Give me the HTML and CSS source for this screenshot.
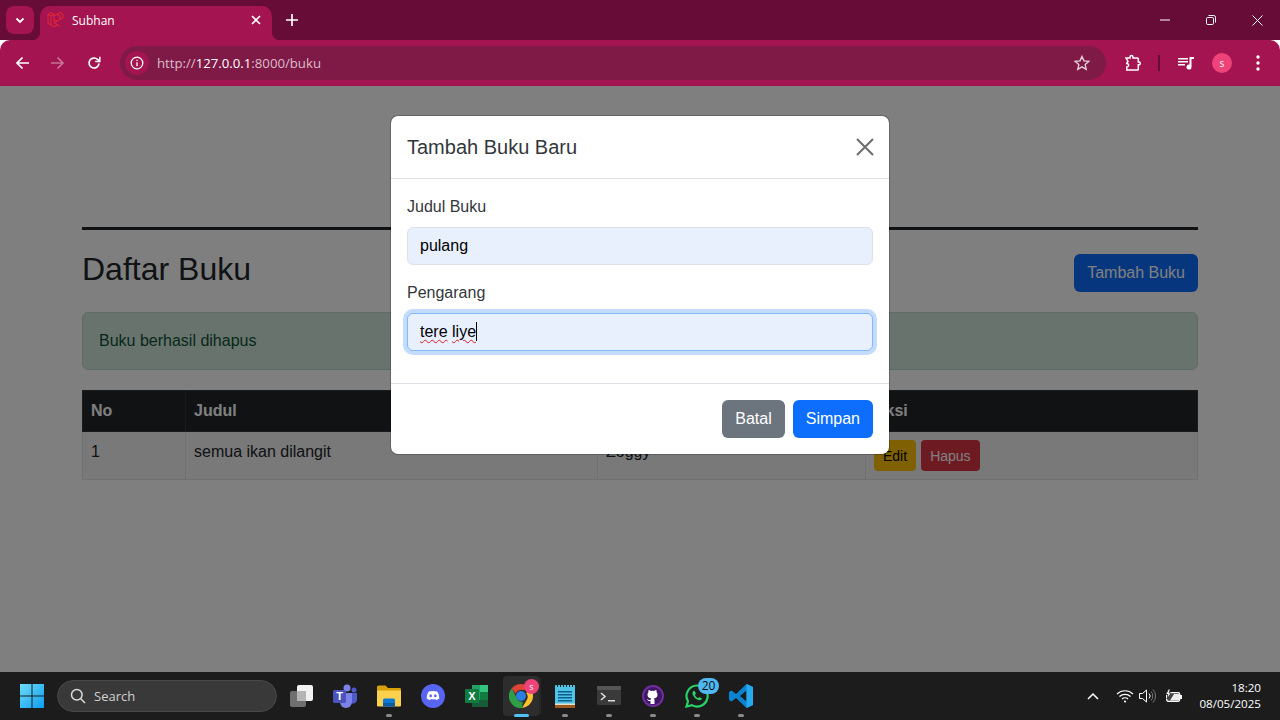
FILE: index.html
```html
<!DOCTYPE html>
<html>
<head>
<meta charset="UTF-8" />
<title>Subhan</title>
<link rel="stylesheet" href="styles.css">
</head>
<body>

<div class="tabstrip">
	<button class="tabsearch"><svg width="12" height="12" viewBox="0 0 12 12"><path d="M2.5 4.5 6 8l3.5-3.500" fill="none" stroke="#fff" stroke-width="1.8"/></svg></button>
	<div class="tab">
		<svg class="favicon" width="18" height="18" viewBox="0 0 18 18" fill="none" stroke="#e0243a" stroke-width="1.1" stroke-linejoin="round"><path d="M1 3.200 4 1.500l3 1.700v8.600l6 3.400M1 3.200v9l6 3.600 3.200-1.800M4 5l3-1.800M1 3.200 4 5v8.600l3 2.200M7 11.800l6-3.400V5l-3-1.700L7 5v3.400l3 1.700 6-3.400V3.300l-3-1.700-3 1.700M13 8.400l3-1.700"/></svg>
		<span class="tab-title">Subhan</span>
		<svg class="tab-close" width="10" height="10" viewBox="0 0 10 10"><path d="M1 1l8 8M9 1 1 9" stroke="#fff" stroke-width="1.6"/></svg>
	</div>
	<svg class="newtab" width="12" height="12" viewBox="0 0 12 12"><path d="M6 0v12M0 6h12" stroke="#fff" stroke-width="1.7"/></svg>
	<div class="winctl">
		<span><svg width="10" height="10" viewBox="0 0 10 10"><path d="M0 5h10" stroke="#fff"/></svg></span>
		<span><svg width="10" height="10" viewBox="0 0 10 10" fill="none" stroke="#fff"><rect x=".5" y="2.500" width="7" height="7" rx="1.200"/><path d="M2.500.5h5.200a1.800 1.800 0 0 1 1.800 1.800v5.200"/></svg></span>
		<span><svg width="11" height="11" viewBox="0 0 11 11"><path d="M.5.5l10 10M10.500.5l-10 10" stroke="#fff"/></svg></span>
	</div>
</div>

<div class="toolbar">
	<svg class="navicon" width="14" height="14" viewBox="0 0 14 14" fill="none" stroke="#fff" stroke-width="1.7"><path d="M14 7H2M7.500 1.500 2 7l5.500 5.500"/></svg>
	<svg class="navicon dim" width="14" height="14" viewBox="0 0 14 14" fill="none" stroke="#fff" stroke-width="1.7"><path d="M0 7h12M6.500 1.500 12 7l-5.500 5.500"/></svg>
	<svg class="navicon" width="14" height="14" viewBox="0 0 14 14" fill="none" stroke="#fff" stroke-width="1.7"><path d="M12 7.500A5 5 0 1 1 10.500 3.400L12.500 5"/><path d="M12.800.8v4.600H8.200" stroke-width="1.500"/></svg>
	<div class="omnibox">
		<span class="site-chip"><svg width="14" height="14" viewBox="0 0 14 14" fill="none" stroke="#fff" stroke-width="1.300"><circle cx="7" cy="7" r="5.800"/><path d="M7 6.200v4M7 3.800v1.300"/></svg></span>
		<span class="url">http://<b>127.0.0.1</b>:8000/buku</span>
		<svg class="star" width="16" height="16" viewBox="0 0 16 16" fill="none" stroke="#e8d0da" stroke-width="1.400"><path d="M8 1.500l2 4.400 4.700.5-3.500 3.200 1 4.700L8 11.900l-4.200 2.400 1-4.700L1.300 6.400 6 5.900z"/></svg>
	</div>
	<svg class="ext" width="18" height="18" viewBox="0 0 18 18" fill="none" stroke="#fff" stroke-width="1.500"><path d="M2 4h4V3a1.500 1.500 0 0 1 3 0v1h4.500a.8.800 0 0 1 .8.800V8h1a1.500 1.500 0 0 1 0 2.800h-1v4.400a.8.800 0 0 1-.8.800H2.800V13a1.800 1.800 0 0 0 0-3.600V9L4 7.500z"/></svg>
	<span class="divider"></span>
	<svg class="media" width="16" height="14" viewBox="0 0 16 14" fill="#fff"><path d="M0 2h10v1.400H0zM0 5h10v1.400H0zM0 8h7v1.400H0z"/><path d="M11.500 1H16v2h-2.500v8a2.500 2.500 0 1 1-2-2.400z"/></svg>
	<span class="avatar">s</span>
	<svg class="menu" width="4" height="16" viewBox="0 0 4 16" fill="#fff"><circle cx="2" cy="2" r="1.700"/><circle cx="2" cy="8" r="1.700"/><circle cx="2" cy="14" r="1.700"/></svg>
</div>

<div class="page">
	<div class="container">
		<hr class="rule">
		<div class="head-row">
			<h2>Daftar Buku</h2>
			<button class="btn btn-primary">Tambah Buku</button>
		</div>
		<div class="alert">Buku berhasil dihapus</div>
		<table>
			<thead>
				<tr><th class="c-no">No</th><th class="c-judul">Judul</th><th class="c-pengarang">Pengarang</th><th>Aksi</th></tr>
			</thead>
			<tbody>
				<tr>
					<td>1</td>
					<td>semua ikan dilangit</td>
					<td>Zoggy</td>
					<td class="actions"><button class="btn btn-sm btn-warning">Edit</button><button class="btn btn-sm btn-danger">Hapus</button></td>
				</tr>
			</tbody>
		</table>
	</div>

	<div class="backdrop">
		<div class="modal">
			<div class="modal-header">
				<h5>Tambah Buku Baru</h5>
				<svg width="18" height="18" viewBox="0 0 18 18"><path d="M1 1l16 16M17 1 1 17" stroke="#6c6c6c" stroke-width="2"/></svg>
			</div>
			<div class="modal-body">
				<label>Judul Buku</label>
				<input class="field" type="text" value="pulang">
				<label>Pengarang</label>
				<div class="field focused"><span class="typo">tere</span> <span class="typo">liye</span><span class="caret"></span></div>
			</div>
			<div class="modal-footer">
				<button class="btn btn-secondary">Batal</button>
				<button class="btn btn-primary">Simpan</button>
			</div>
		</div>
	</div>
</div>

<div class="taskbar">
	<div class="task">
		<svg width="24" height="24" viewBox="0 0 24 24"><defs><linearGradient id="win" x1="0" y1="0" x2="1" y2="1"><stop offset="0" stop-color="#6fdcf8"/><stop offset="1" stop-color="#0b9cf0"/></linearGradient></defs><path fill="url(#win)" d="M0 0h11.500v11.500H0zM12.500 0H24v11.500H12.500zM0 12.500h11.500V24H0zM12.500 12.500H24V24H12.500z"/></svg>
	</div>
	<div class="search">
		<svg width="16" height="16" viewBox="0 0 16 16" fill="none" stroke="#ddd" stroke-width="1.500"><circle cx="6.800" cy="6.800" r="5.300"/><path d="M10.800 10.800 15 15"/></svg>
		<span>Search</span>
	</div>
	<div class="tasks">
		<div class="task"><svg width="24" height="24" viewBox="0 0 24 24"><rect x="8" y="1" width="16" height="16" rx="2" fill="#f2f2f2"/><rect x="1" y="7" width="16" height="16" rx="2" fill="#6f6f6f"/><rect x="8" y="7" width="9" height="10" fill="#b5b5b5"/></svg></div>
		<div class="task"><svg width="26" height="24" viewBox="0 0 26 24"><circle cx="15" cy="4" r="3.500" fill="#7b83eb"/><circle cx="22" cy="6" r="2.500" fill="#5059c9"/><path d="M18 9h7v7a4 4 0 0 1-6 3z" fill="#5059c9"/><path d="M8 9h12v9a6 6 0 0 1-12 0z" fill="#7b83eb"/><rect x="1" y="6" width="13" height="13" rx="1.500" fill="#4b53bc"/><text x="7.500" y="16" class="svg-t">T</text></svg></div>
		<div class="task open"><svg width="26" height="24" viewBox="0 0 26 24"><path d="M1 3a1.500 1.500 0 0 1 1.500-1.500h7L12 4h12a1.500 1.500 0 0 1 1 1.500V8H1z" fill="#d9a109"/><path d="M1 6.500h24v15a1 1 0 0 1-1 1H2a1 1 0 0 1-1-1z" fill="#fcd04f"/><path d="M7 16a1.500 1.500 0 0 1 1.500-1.500h9A1.500 1.500 0 0 1 19 16v6.500H7z" fill="#0f78d4"/><path d="M7 19h12v3.500H7z" fill="#0c5ba3"/></svg></div>
		<div class="task"><svg width="24" height="24" viewBox="0 0 24 24"><circle cx="12" cy="12" r="12" fill="#5865f2"/><path d="M7.800 7.600c2.700-.9 5.700-.9 8.400 0 1.300 1.900 2 4 2.100 7-1.100.9-2.200 1.400-3.300 1.700l-.8-1.200c-1.400.4-3 .4-4.400 0l-.8 1.200c-1.100-.3-2.200-.8-3.300-1.700.1-3 .8-5.100 2.100-7z" fill="#fff"/><ellipse cx="9.700" cy="11.800" rx="1.300" ry="1.500" fill="#5865f2"/><ellipse cx="14.300" cy="11.800" rx="1.300" ry="1.500" fill="#5865f2"/></svg></div>
		<div class="task"><svg width="24" height="24" viewBox="0 0 24 24"><path d="M7 1h16v22H7z" fill="#21a366"/><path d="M15 1h8v7h-8z" fill="#33c481"/><path d="M15 8h8v8h-8z" fill="#107c41"/><path d="M7 16h16v7H7z" fill="#185c37"/><rect y="5" width="14" height="14" rx="1" fill="#107c41"/><text x="7" y="16" class="svg-t">X</text></svg></div>
		<div class="task active">
			<svg width="24" height="24" viewBox="0 0 24 24"><path d="M12 0a12 12 0 0 1 10.400 6H12a6 6 0 0 0-5.600 3.800L2.600 4.500A12 12 0 0 1 12 0z" fill="#db4437"/><path d="M22.400 6A12 12 0 0 1 13 24l4.400-7.600A6 6 0 0 0 17.200 9z" fill="#fbc02d"/><path d="M13 24A12 12 0 0 1 2.600 4.500L7 12.600a6 6 0 0 0 6.800 5.100z" fill="#2e9f47"/><circle cx="12" cy="12" r="5" fill="#2a7de1"/></svg>
			<span class="badge-s">s</span>
		</div>
		<div class="task open"><svg width="22" height="25" viewBox="0 0 22 25"><rect x="1" y="1" width="20" height="23" rx="1" fill="#4fc3e8"/><path d="M1 21h20v3H1z" fill="#9c5a1e"/><path d="M1 19.500h20V21H1z" fill="#e8e0c8"/><path d="M4 7h14v1.500H4zM4 10h14v1.500H4zM4 13h14v1.500H4zM4 16h14v1.500H4z" fill="#0d5f8a"/><path d="M3 0h1v3H3zM6 0h1v3H6zM9 0h1v3H9zM12 0h1v3h-1zM15 0h1v3h-1zM18 0h1v3h-1z" fill="#1d1d1d"/></svg></div>
		<div class="task open"><svg width="24" height="20" viewBox="0 0 24 20"><rect width="24" height="19" rx="1.500" fill="#3a3a3a"/><rect width="24" height="4" rx="1" fill="#555"/><path d="M4 7l4 3.500L4 14" fill="none" stroke="#ddd" stroke-width="1.600"/><path d="M11 14h7v1.500h-7z" fill="#ddd"/></svg></div>
		<div class="task open"><svg width="24" height="24" viewBox="0 0 24 24"><circle cx="12" cy="12" r="11" fill="#6e2f9e"/><circle cx="12" cy="12" r="9" fill="#3f1763"/><path d="M9.500 20v-3c-2.500.5-3-1-3.500-2 1 .2 1.500 1.500 3.500 1 0-.7.300-1.200.7-1.500-2.500-.3-3.700-1.500-3.700-4 0-1 .3-1.800 1-2.500-.2-.7-.1-1.500.1-2 .9 0 1.500.4 2.200 1a8 8 0 0 1 3.400 0c.7-.6 1.300-1 2.200-1 .2.500.3 1.300.1 2 .7.700 1 1.500 1 2.500 0 2.500-1.200 3.700-3.700 4 .4.300.7.900.7 1.700V20z" fill="#fff"/></svg></div>
		<div class="task open">
			<svg width="24" height="24" viewBox="0 0 24 24"><path d="M12 1.500a10.500 10.500 0 0 0-9 15.800L1.500 22.500l5.400-1.400A10.500 10.500 0 1 0 12 1.500z" fill="none" stroke="#25d366" stroke-width="2.200"/><path d="M8.500 7c-1 .8-1.300 2-.8 3.400 1 2.700 3 4.600 5.700 5.700 1.300.5 2.500.2 3.300-.8.300-.4.200-.9-.2-1.100l-1.700-.9c-.4-.2-.7-.1-1 .2l-.6.700c-1.500-.6-2.700-1.800-3.300-3.300l.7-.6c.3-.3.4-.6.200-1l-.9-1.800C9.700 6.900 9 6.700 8.500 7z" fill="#25d366"/></svg>
			<span class="badge-n">20</span>
		</div>
		<div class="task open"><svg width="24" height="24" viewBox="0 0 24 24"><path d="M17.500 0 24 3v18l-6.500 3L7 14l-4.500 3.500L0 16V8l2.500-1.500L7 10zM17.500 6.500 11 12l6.500 5.500z" fill="#0a84d0" fill-rule="evenodd"/><path d="M17.500 0 24 3v18l-6.500 3z" fill="#25a9ef"/></svg></div>
	</div>
	<div class="tray">
		<svg class="t-chevron" width="12" height="8" viewBox="0 0 12 8" fill="none" stroke="#fff" stroke-width="1.500"><path d="M1 7l5-5 5 5"/></svg>
		<svg class="t-wifi" width="18" height="14" viewBox="0 0 18 14" fill="none" stroke="#fff" stroke-width="1.200"><path d="M1 5a11.500 11.500 0 0 1 16 0M3.500 7.500a8 8 0 0 1 11 0M6 10a4.300 4.300 0 0 1 6 0"/><circle cx="9" cy="12.500" r="1.100" fill="#fff" stroke="none"/></svg>
		<svg class="t-vol" width="17" height="16" viewBox="0 0 17 16" fill="none" stroke="#fff"><path d="M.5 5.500h3L7.500 2v12l-4-3.500h-3z"/><path d="M10 5.500a3.500 3.500 0 0 1 0 5"/><path d="M12 3.500a6.500 6.500 0 0 1 0 9M14 1.500a9.500 9.500 0 0 1 0 13" stroke="#777"/></svg>
		<svg class="t-batt" width="18" height="14" viewBox="0 0 18 14"><rect x="1.700" y="3.700" width="13" height="8.600" rx="1.500" fill="#444" stroke="#fff" stroke-width="1.300"/><path d="M5 11.500 9 5h5v6.500z" fill="#eee"/><rect x="15" y="6" width="2" height="4" fill="#fff"/><path d="M3.500 0 1 5.500h2L2 10l4.200-6H4L5.200 0z" fill="#fff" stroke="#1c1c1c" stroke-width=".7"/></svg>
		<div class="clock"><div>18:20</div><div>08/05/2025</div></div>
	</div>
</div>

</body>
</html>
```

FILE: styles.css
```css
* {
	box-sizing: border-box;
}
body {
	margin: 0;
	height: 720px;
	overflow: hidden;
	display: flex;
	flex-direction: column;
	font-family: "Liberation Sans", Arial, sans-serif;
	font-size: 16px;
	color: #212529;
}
button {
	font-family: inherit;
}

/* tab bar */
.tabstrip {
	height: 40px;
	flex: none;
	display: flex;
	align-items: flex-start;
	background: #660c36;
}
.tabsearch {
	width: 28px;
	height: 28px;
	margin: 6px 0 0 6px;
	padding: 0;
	border: 0;
	border-radius: 8px;
	background: #a31450;
	display: flex;
	align-items: center;
	justify-content: center;
}
.tab {
	position: relative;
	width: 232px;
	height: 34px;
	margin: 6px 0 0 6px;
	padding: 0 11px 6px 7px;
	display: flex;
	align-items: center;
	border-radius: 10px 10px 0 0;
	background: #a31450;
	color: #fff;
	font-family: "Open Sans", sans-serif;
	font-size: 12px;
}
.tab::before,
.tab::after {
	content: "";
	position: absolute;
	bottom: 0;
	width: 8px;
	height: 8px;
}
.tab::before {
	left: -8px;
	background: radial-gradient(circle at 0 0, #660c36 8px, #a31450 8.5px);
}
.tab::after {
	right: -8px;
	background: radial-gradient(circle at 100% 0, #660c36 8px, #a31450 8.5px);
}
.tab-title {
	margin-left: 7px;
	flex: 1;
}
.newtab {
	margin: 14px 0 0 14px;
}
.winctl {
	margin-left: auto;
	display: flex;
}
.winctl span {
	width: 46px;
	height: 40px;
	display: flex;
	align-items: center;
	justify-content: center;
}

/* address bar */
.toolbar {
	height: 46px;
	flex: none;
	display: flex;
	align-items: center;
	padding-left: 15px;
	background: #a31450;
	border-radius: 10px 10px 0 0;
}
.navicon {
	margin-right: 22px;
}
.navicon.dim {
	opacity: .4;
}
.omnibox {
	width: 986px;
	height: 34px;
	margin-left: -3px;
	padding: 0 16px 0 5px;
	display: flex;
	align-items: center;
	border-radius: 17px;
	background: #7e1a45;
}
.site-chip {
	width: 24px;
	height: 24px;
	border-radius: 50%;
	background: #a31450;
	display: flex;
	align-items: center;
	justify-content: center;
}
.url {
	margin-left: 8px;
	flex: 1;
	font-family: "Open Sans", sans-serif;
	font-size: 13.2px;
	color: #dcbccb;
}
.url b {
	font-weight: 400;
	color: #fff;
}
.ext {
	margin-left: 18px;
}
.divider {
	width: 2px;
	height: 16px;
	margin-left: 16px;
	background: #660c36;
}
.media {
	margin-left: 18px;
}
.avatar {
	width: 20px;
	height: 20px;
	margin-left: 18px;
	border-radius: 50%;
	background: #ee4379;
	color: #fff;
	font-family: "Open Sans", sans-serif;
	font-size: 10px;
	line-height: 20px;
	text-align: center;
}
.menu {
	margin-left: 24px;
}

/* page */
.page {
	position: relative;
	flex: 1;
	background: #fff;
	overflow: hidden;
}
.container {
	padding: 141px 82px 0;
}
.rule {
	height: 3px;
	margin: 0 0 20px;
	border: 0;
	background: #212529;
}
.head-row {
	display: flex;
	justify-content: space-between;
	align-items: center;
	margin-bottom: 16px;
}
h2 {
	margin: 0 0 8px;
	font-size: 32px;
	font-weight: 500;
	line-height: 1.2;
}
.btn {
	height: 38px;
	padding: 0 13px;
	border: 0;
	border-radius: 6px;
	font-size: 16px;
}
.btn-sm {
	height: 31px;
	padding: 0 9px;
	border-radius: 4px;
	font-size: 14px;
}
.btn-primary {
	background: #0d6efd;
	color: #fff;
}
.btn-secondary {
	background: #6c757d;
	color: #fff;
}
.btn-warning {
	background: #ffc107;
	color: #000;
}
.btn-danger {
	margin-left: 5px;
	background: #dc3545;
	color: #fff;
}
.alert {
	height: 58px;
	margin-bottom: 20px;
	padding: 16px;
	border: 1px solid #badbcc;
	border-radius: 6px;
	background: #d1e7dd;
	color: #0f5132;
	line-height: 24px;
}
table {
	width: 100%;
	border-collapse: collapse;
	table-layout: fixed;
}
th,
td {
	padding: 8px;
	border: 1px solid #dee2e6;
	text-align: left;
	vertical-align: top;
	line-height: 24px;
}
th {
	height: 41px;
	background: #212529;
	border-color: #32383e;
	color: #fff;
}
td {
	height: 48px;
	background: #f2f2f2;
}
.c-no {
	width: 103px;
}
.c-judul {
	width: 412px;
}
.c-pengarang {
	width: 268px;
}

/* modal */
.backdrop {
	position: absolute;
	inset: 0;
	padding-top: 29px;
	display: flex;
	justify-content: center;
	align-items: flex-start;
	background: rgba(0, 0, 0, .5);
}
.modal {
	width: 500px;
	border: 1px solid rgba(0, 0, 0, .2);
	border-radius: 8px;
	background: #fff;
	background-clip: padding-box;
	color: #33373b;
}
.modal-header {
	height: 63px;
	padding: 0 15px 0 16px;
	display: flex;
	justify-content: space-between;
	align-items: center;
	border-bottom: 1px solid #dee2e6;
}
h5 {
	margin: 0;
	font-size: 20px;
	font-weight: 500;
	line-height: 1.5;
}
.modal-body {
	padding: 16px;
}
label {
	display: block;
	margin-bottom: 8px;
	line-height: 24px;
}
.field {
	display: block;
	width: 100%;
	height: 38px;
	margin-bottom: 16px;
	padding: 0 12px;
	border: 1px solid #dee2e6;
	border-radius: 6px;
	background: #e8f0fe;
	color: #000;
	font-family: inherit;
	font-size: 16px;
	line-height: 36px;
	outline: 0;
}
.field.focused {
	border-color: #86b7fe;
	box-shadow: 0 0 0 4px rgba(13, 110, 253, .25);
}
.typo {
	text-decoration: underline wavy #e01b24 1px;
	text-underline-offset: 2px;
}
.caret {
	display: inline-block;
	width: 1px;
	height: 19px;
	background: #000;
	vertical-align: -4px;
}
.modal-footer {
	padding: 16px;
	display: flex;
	justify-content: flex-end;
	gap: 8px;
	border-top: 1px solid #dee2e6;
}

/* windows taskbar */
.taskbar {
	height: 48px;
	flex: none;
	display: flex;
	align-items: center;
	padding: 0 19px 0 10px;
	background: #1c1c1c;
}
.task {
	position: relative;
	width: 44px;
	height: 40px;
	display: flex;
	align-items: center;
	justify-content: center;
}
.task.open::after,
.task.active::after {
	content: "";
	position: absolute;
	left: 19px;
	bottom: -1px;
	width: 6px;
	height: 3px;
	border-radius: 2px;
	background: #8b8b8b;
}
.task.active {
	background: #2d2d2d;
	border-radius: 4px;
	box-shadow: 3px 0 0 -1px #262626;
	width: 36px;
	margin: 0 4px;
}
.task.active::after {
	left: 11px;
	width: 15px;
	background: #4fc3f7;
}
.search {
	width: 220px;
	height: 32px;
	margin-left: 3px;
	padding-left: 12px;
	display: flex;
	align-items: center;
	gap: 8px;
	border: 1px solid #484848;
	border-radius: 16px;
	background: #393939;
	color: #d0d0d0;
	font-family: "Open Sans", sans-serif;
	font-size: 13px;
}
.tasks {
	margin-left: 2px;
	display: flex;
}
.badge-s,
.badge-n {
	position: absolute;
}
.badge-s {
	top: 3px;
	right: 0;
	width: 15px;
	height: 15px;
	border-radius: 50%;
	background: #ee4379;
	color: #fff;
	font-family: "Open Sans", sans-serif;
	font-size: 9px;
	line-height: 15px;
	text-align: center;
}
.badge-n {
	top: 2px;
	left: 23px;
	width: 21px;
	height: 16px;
	border-radius: 8px;
	background: #4fb8f0;
	color: #111;
	font-family: "Open Sans", sans-serif;
	font-size: 12px;
	line-height: 16px;
	text-align: center;
}
.svg-t {
	fill: #fff;
	font-family: "Liberation Sans", sans-serif;
	font-size: 11px;
	font-weight: 700;
	text-anchor: middle;
}
.tray {
	margin-left: auto;
	display: flex;
	align-items: center;
	color: #fff;
}
.t-wifi {
	margin-left: 17px;
}
.t-vol {
	margin-left: 5px;
}
.t-batt {
	margin-left: 9px;
}
.clock {
	margin-left: 16px;
	font-family: "Open Sans", sans-serif;
	font-size: 11.6px;
	line-height: 16px;
	text-align: right;
}
```
